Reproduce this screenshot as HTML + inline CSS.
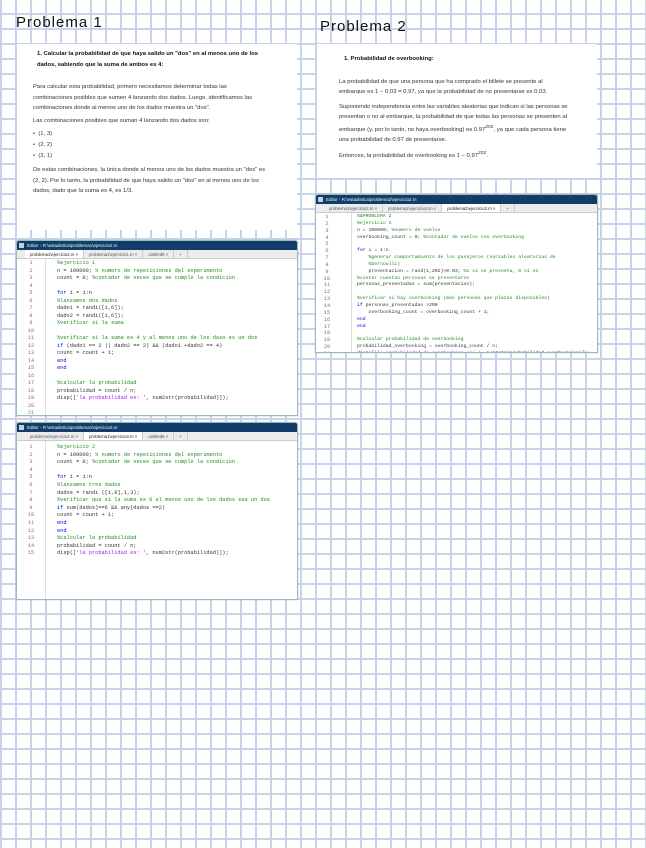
<!DOCTYPE html>
<html><head><meta charset="utf-8"><style>
*{margin:0;padding:0;box-sizing:border-box}
body{width:646px;height:848px;overflow:hidden;position:relative;font-family:"Liberation Sans",sans-serif;
background-color:#fff;
background-image:linear-gradient(to right,#c8d4ea 2px,transparent 2px),linear-gradient(to bottom,#c8d4ea 2px,transparent 2px);
background-size:15px 15px;background-position:0px 13px;}
.t{position:absolute;font-size:15px;letter-spacing:1px;color:#111}
.box{position:absolute;background:#fff;color:#333;font-size:5.9px;line-height:10.5px}
.box b{color:#111}
.ed{position:absolute;background:#fff;border:1px solid #9bb;border-radius:3px 3px 0 0;overflow:hidden;box-shadow:0 0 1px #99a}
.tb{height:9px;background:#123d6b;color:#dfe;font-size:4.5px;line-height:9px;padding-left:10px;position:relative}
.tb:before{content:"";position:absolute;left:2px;top:2px;width:5px;height:5px;background:#ccd}
.tabs{height:9px;background:#ececec;border-bottom:1px solid #ccc;display:flex;padding-left:8px;font-size:4.3px;line-height:9px;color:#555}
.tabs span{padding:0 5px;border-right:1px solid #ccc}
.tabs span.a{background:#fff;color:#222}
.code{position:relative;font-family:"Liberation Mono",monospace;font-size:5.3px;white-space:pre;color:#333}
.ln{position:absolute;left:0;width:28px;text-align:center;color:#777}
.cd{position:absolute}
.c{color:#228b22}.k{color:#0000ee}.s{color:#a020f0}
.gut{position:absolute;top:0;bottom:0;width:1px;background:#ddd}
</style></head><body>
<div class="t" style="left:16px;top:14px">Problema 1</div>
<div class="t" style="left:320px;top:18px">Problema 2</div>

<div class="box" style="left:17px;top:44px;width:280px;height:186px;padding:5px 30px 0 16px">
<div style="padding-left:4px"><b>1. Calcular la probabilidad de que haya salido un "dos" en al menos uno de los dados, sabiendo que la suma de ambos es 4:</b></div>
<div style="margin-top:12px">Para calcular esta probabilidad, primero necesitamos determinar todas las combinaciones posibles que sumen 4 lanzando dos dados. Luego, identificamos las combinaciones donde al menos uno de los dados muestra un "dos".</div>
<div style="margin-top:2px">Las combinaciones posibles que suman 4 lanzando dos dados son:</div>
<div style="margin-top:3px;line-height:11px">•&nbsp;&nbsp;(1, 3)<br>•&nbsp;&nbsp;(2, 2)<br>•&nbsp;&nbsp;(3, 1)</div>
<div style="margin-top:3px">De estas combinaciones, la única donde al menos uno de los dados muestra un "dos" es (2, 2). Por lo tanto, la probabilidad de que haya salido un "dos" en al menos uno de los dados, dado que la suma es 4, es 1/3.</div>
</div>

<div class="box" style="left:317px;top:44px;width:280px;height:134px;padding:10px 28px 0 22px">
<div style="padding-left:5px"><b>1. Probabilidad de overbooking:</b></div>
<div style="margin-top:12px">La probabilidad de que una persona que ha comprado el billete se presente al embarque es 1 − 0.03 = 0.97, ya que la probabilidad de no presentarse es 0.03.</div>
<div style="margin-top:4px">Suponiendo independencia entre las variables aleatorias que indican si las personas se presentan o no al embarque, la probabilidad de que todas las personas se presenten al embarque (y, por lo tanto, no haya overbooking) es 0.97<sup>202</sup>, ya que cada persona tiene una probabilidad de 0.97 de presentarse.</div>
<div style="margin-top:4px">Entonces, la probabilidad de overbooking es 1 − 0.97<sup>202</sup>.</div>
</div>

<div class="ed" style="left:16px;top:240px;width:282px;height:176px">
<div class="tb">Editor - R:\estadistica\problema1\ejercicio2.m</div>
<div class="tabs"><span class="a">problema1\ejercicio2.m ×</span><span>problema1\ejercicio1.m ×</span><span>untitled6 ×</span><span>+</span></div>
<div class="code" style="height:160px"><div class="gut" style="left:28px"></div>
<div class="ln" style="top:1px;line-height:7.5px">1
2
3
4
5
6
7
8
9
10
11
12
13
14
15
16
17
18
19
20
21</div>
<div class="cd" style="left:40px;top:1px;line-height:7.5px"><span class="c">%ejercicio 1</span>
n = 100000; <span class="c">% numero de repeticiones del experimento</span>
count = 0; <span class="c">%contador de veces que se cumple la condicion</span>

<span class="k">for</span> i = 1:n
<span class="c">%lanzamos dos dados</span>
dado1 = randi([1,6]);
dado2 = randi([1,6]);
<span class="c">%verificar si la suma</span>

<span class="c">%verificar si la suma es 4 y al menos uno de los daso es un dos</span>
<span class="k">if</span> (dado1 == 2 || dado2 == 2) &amp;&amp; (dado1 +dado2 == 4)
count = count + 1;
<span class="k">end</span>
<span class="k">end</span>

<span class="c">%calcular la probabilidad</span>
probabilidad = count / n;
disp([<span class="s">'la probabilidad es: '</span>, num2str(probabilidad)]);</div></div>
</div>

<div class="ed" style="left:16px;top:422px;width:282px;height:178px">
<div class="tb">Editor - R:\estadistica\problema1\ejercicio3.m</div>
<div class="tabs"><span>problema1\ejercicio2.m ×</span><span class="a">problema1\ejercicio3.m ×</span><span>untitled6 ×</span><span>+</span></div>
<div class="code" style="height:160px"><div class="gut" style="left:28px"></div>
<div class="ln" style="top:3px;line-height:7.6px">1
2
3
4
5
6
7
8
9
10
11
12
13
14
15</div>
<div class="cd" style="left:40px;top:3px;line-height:7.6px"><span class="c">%ejercicio 2</span>
n = 100000; <span class="c">% numero de repeticiones del experimento</span>
count = 0; <span class="c">%contador de veces que se cumple la condicion</span>

<span class="k">for</span> i = 1:n
<span class="c">%lanzamos tres dados</span>
dados = randi ([1,6],1,3);
<span class="c">%verificar que si la suma es 6 al menos uno de los dados sea un dos</span>
<span class="k">if</span> sum(dados)==6 &amp;&amp; any(dados ==2)
count = count + 1;
<span class="k">end</span>
<span class="k">end</span>
<span class="c">%calcular la probabilidad</span>
probabilidad = count / n;
disp([<span class="s">'la probabilidad es: '</span>, num2str(probabilidad)]);</div></div>
</div>

<div class="ed" style="left:315px;top:194px;width:283px;height:159px">
<div class="tb">Editor - R:\estadistica\problema2\ejercicio2.m</div>
<div class="tabs"><span>problema1\ejercicio2.m ×</span><span>problema1\ejercicio3.m ×</span><span class="a">problema2\ejercicio2.m ×</span><span>+</span></div>
<div class="code" style="height:140px"><div class="gut" style="left:35px"></div>
<div class="ln" style="top:1px;line-height:6.85px;width:22px">1
2
3
4
5
6
7
8
9
10
11
12
13
14
15
16
17
18
19
20
21</div>
<div class="cd" style="left:41px;top:1px;line-height:6.85px;font-size:4.8px"><span class="c">%&amp;PROBLEMA 2</span>
<span class="c">%ejercicio 2</span>
n = 100000; <span class="c">%numero de vuelos</span>
overbooking_count = 0; <span class="c">%contador de vuelos con overbooking</span>

<span class="k">for</span> i = 1:n
    <span class="c">%generar comportamiento de los pasajeros (variables aleatorias de</span>
    <span class="c">%bernoulli)</span>
    presentacion = rand(1,202)&gt;0.03; <span class="c">%1 si se presneta, 0 si no</span>
<span class="c">%contar cuantas personas se presentaron</span>
personas_presentadas = sum(presentacion);

<span class="c">%verificar si hay overbooking (más personas que plazas disponibles)</span>
<span class="k">if</span> personas_presentadas &gt;200
    overbooking_count = overbooking_count + 1;
<span class="k">end</span>
<span class="k">end</span>

<span class="c">%calcular probabilidad de overbooking</span>
probabilidad_overbooking = overbooking_count / n;
disp([<span class="s">'la probabilidad de overbooking es: '</span>, num2str(probabilidad_overbooking)]);</div></div>
</div>
</body></html>
